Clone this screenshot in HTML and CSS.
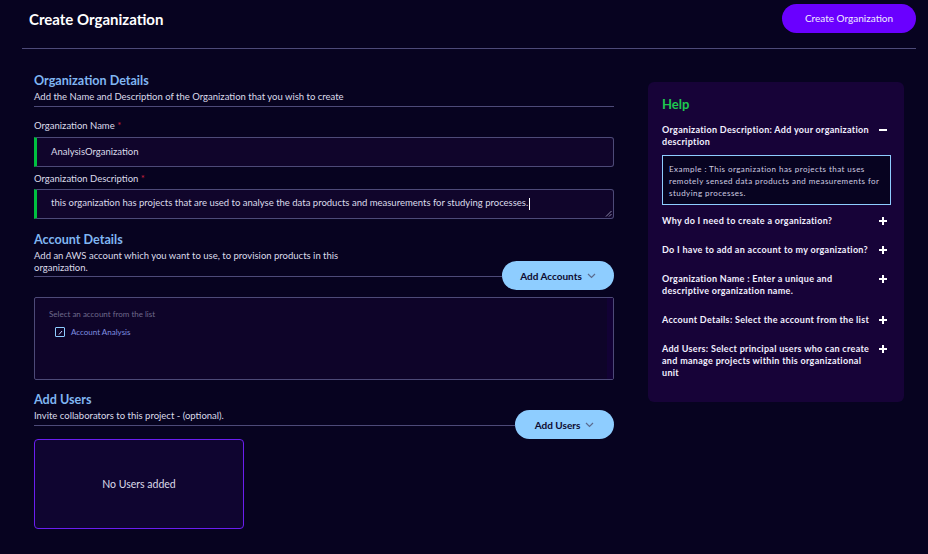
FILE: index.html
```html
<!DOCTYPE html>
<html>
<head>
<meta charset="utf-8">
<link rel="stylesheet" href="styles.css">
</head>
<body>
<div class="page">
  <header class="topbar">
    <h1 class="title">Create Organization</h1>
    <button class="btn-primary">Create Organization</button>
  </header>
  <div class="divider"></div>
  <main class="main">
    <section class="form">
      <div class="sec-head">
        <div class="sec-text">
          <h2 class="sec-title">Organization Details</h2>
          <p class="sec-sub">Add the Name and Description of the Organization that you wish to create</p>
        </div>
      </div>
      <label class="label first">Organization Name <span class="req">*</span></label>
      <div class="field">AnalysisOrganization</div>
      <label class="label">Organization Description <span class="req">*</span></label>
      <div class="field area">this organization has projects that are used to analyse the data products and measurements for studying processes.<span class="caret"></span>
        <svg class="grip" width="7" height="7" viewBox="0 0 7 7"><path d="M6.5 1 L1 6.5 M6.5 4 L4 6.5" stroke="#8a88a8" stroke-width="1"/></svg>
      </div>

      <div class="sec-head acc">
        <div class="sec-text">
          <h2 class="sec-title">Account Details</h2>
          <p class="sec-sub narrow">Add an AWS account which you want to use, to provision products in this organization.</p>
        </div>
        <button class="btn-pill wide">Add Accounts <svg class="chev" width="9" height="6" viewBox="0 0 9 6"><path d="M1 1 L4.5 4.5 L8 1" fill="none" stroke="#5b6b8f" stroke-width="1.2"/></svg></button>
      </div>
      <div class="acc-box">
        <div class="acc-hint">Select an account from the list</div>
        <div class="acc-row">
          <span class="check"><svg width="7" height="7" viewBox="0 0 7 7"><path d="M2 5.5 L5 2" stroke="#c8d6ff" stroke-width="1"/></svg></span>
          <span class="acc-name">Account Analysis</span>
        </div>
        <div class="scroll-strip"></div>
      </div>

      <div class="sec-head users">
        <div class="sec-text">
          <h2 class="sec-title">Add Users</h2>
          <p class="sec-sub">Invite collaborators to this project - (optional).</p>
        </div>
        <button class="btn-pill">Add Users <svg class="chev" width="9" height="6" viewBox="0 0 9 6"><path d="M1 1 L4.5 4.5 L8 1" fill="none" stroke="#5b6b8f" stroke-width="1.2"/></svg></button>
      </div>
      <div class="users-box">No Users added</div>
    </section>

    <aside class="help">
      <h3 class="help-title">Help</h3>
      <div class="help-item open">
        <span class="q">Organization Description: Add your organization description</span>
        <svg class="ico" width="8" height="8" viewBox="0 0 8 8"><rect x="0" y="3" width="8" height="2" fill="#fff"/></svg>
      </div>
      <div class="help-answer">Example : This organization has projects that uses remotely sensed data products and measurements for studying processes.</div>
      <div class="help-item">
        <span class="q">Why do I need to create a organization?</span>
        <svg class="ico" width="8" height="8" viewBox="0 0 8 8"><path d="M3 0h2v3h3v2h-3v3h-2v-3h-3v-2h3z" fill="#fff"/></svg>
      </div>
      <div class="help-item">
        <span class="q">Do I have to add an account to my organization?</span>
        <svg class="ico" width="8" height="8" viewBox="0 0 8 8"><path d="M3 0h2v3h3v2h-3v3h-2v-3h-3v-2h3z" fill="#fff"/></svg>
      </div>
      <div class="help-item">
        <span class="q">Organization Name : Enter a unique and descriptive organization name.</span>
        <svg class="ico" width="8" height="8" viewBox="0 0 8 8"><path d="M3 0h2v3h3v2h-3v3h-2v-3h-3v-2h3z" fill="#fff"/></svg>
      </div>
      <div class="help-item">
        <span class="q">Account Details: Select the account from the list</span>
        <svg class="ico" width="8" height="8" viewBox="0 0 8 8"><path d="M3 0h2v3h3v2h-3v3h-2v-3h-3v-2h3z" fill="#fff"/></svg>
      </div>
      <div class="help-item">
        <span class="q">Add Users: Select principal users who can create and manage projects within this organizational unit</span>
        <svg class="ico" width="8" height="8" viewBox="0 0 8 8"><path d="M3 0h2v3h3v2h-3v3h-2v-3h-3v-2h3z" fill="#fff"/></svg>
      </div>
    </aside>
  </main>
</div>
</body>
</html>
```
FILE: styles.css
```css
* { box-sizing: border-box; }
html, body { margin: 0; padding: 0; }
body {
  background: #070320;
  font-family: "Lato", "Noto Sans", sans-serif;
  color: #dcdbea;
  width: 928px;
  height: 554px;
  overflow: hidden;
}
.page { width: 928px; }
.topbar {
  display: flex;
  align-items: center;
  justify-content: space-between;
  padding: 4px 12px 0 29px;
  height: 33px;
}
.title {
  margin: 0;
  font-size: 15px;
  font-weight: 700;
  color: #ffffff;
  line-height: 18px;
}
.btn-primary {
  background: #6a00ff;
  color: #f0ecff;
  border: none;
  border-radius: 15px;
  height: 29px;
  width: 134px;
  font-family: inherit;
  font-size: 10px;
  padding: 0 0 1px;
}
.divider {
  height: 1px;
  background: #4d4a78;
  margin: 15px 12px 0 22px;
}
.main {
  display: flex;
  gap: 34px;
  padding-left: 34px;
}
.form {
  width: 580px;
  display: flex;
  flex-direction: column;
}
.sec-head {
  display: flex;
  align-items: flex-end;
  margin-top: 24px;
}
.sec-text {
  flex: 1;
  border-bottom: 1px solid #4d4a78;
  padding-bottom: 3px;
}
.sec-head.acc .sec-text { padding-bottom: 2px; }
.sec-title {
  margin: 0;
  font-size: 12.6px;
  font-weight: 700;
  color: #80b6f2;
  line-height: 16px;
}
.sec-sub {
  margin: 2px 0 0;
  font-size: 9.5px;
  line-height: 12px;
  color: #dcdbea;
}
.sec-sub.narrow { max-width: 312px; }
.label {
  font-size: 9.5px;
  line-height: 14px;
  color: #dcdbea;
}
.label.first { margin-top: 12px; }
.label + .field { margin-top: 4px; }
.field + .label { margin-top: 5px; }
.req { color: #c8203c; }
.field {
  position: relative;
  height: 30px;
  background: #10052b;
  border: 1px solid #4d4a78;
  border-left: 3px solid #00c040;
  border-radius: 0 3px 3px 0;
  font-size: 9.5px;
  line-height: 28px;
  padding-left: 14px;
  color: #dcdbea;
}
.field.area { margin-top: 3px; line-height: 26px; }
.caret {
  display: inline-block;
  width: 1px;
  height: 12px;
  background: #ffffff;
  vertical-align: middle;
  margin-left: 1px;
}
.grip { position: absolute; right: 1px; bottom: 1px; }
.sec-head.acc { margin-top: 13px; }
.btn-pill {
  flex: none;
  height: 29px;
  width: 99px;
  border-radius: 15px;
  border: none;
  background: #8ecdff;
  color: #0d0a30;
  font-family: inherit;
  font-weight: 700;
  font-size: 10px;
  margin-bottom: -13px;
  display: flex;
  align-items: center;
  justify-content: center;
  gap: 5px;
  padding: 0;
}
.btn-pill.wide { width: 112px; }
.acc-box {
  position: relative;
  margin-top: 20px;
  height: 83px;
  background: #0e0429;
  border: 1px solid #4d4a78;
  border-radius: 2px;
  padding: 11px 0 0 14px;
}
.acc-hint {
  font-size: 8px;
  line-height: 10px;
  color: #6e6a8c;
}
.acc-row {
  display: flex;
  align-items: center;
  gap: 6px;
  margin-top: 8px;
  padding-left: 6px;
}
.check {
  width: 10px;
  height: 10px;
  border: 1px solid #8ecdff;
  border-radius: 1px;
  display: flex;
  align-items: center;
  justify-content: center;
}
.acc-name {
  font-size: 8px;
  line-height: 10px;
  color: #7f8fe0;
}
.scroll-strip {
  position: absolute;
  right: 0;
  top: 0;
  bottom: 0;
  width: 6px;
  background: #120135;
}
.sec-head.users { margin-top: 12px; }
.users-box {
  margin-top: 13px;
  width: 210px;
  height: 90px;
  flex: none;
  border: 1px solid #6a1ef0;
  border-radius: 4px;
  background: #0f0530;
  display: flex;
  align-items: center;
  justify-content: center;
  font-size: 10.5px;
  color: #dcdbea;
}
.help {
  margin-top: 33px;
  width: 256px;
  height: 320px;
  background: #170338;
  border-radius: 6px;
  padding: 14px 14px 0 14px;
}
.help-title {
  margin: 0;
  font-size: 13px;
  font-weight: 700;
  color: #1ec850;
  line-height: 16px;
}
.help-item {
  display: flex;
  justify-content: space-between;
  align-items: flex-start;
  padding: 9px 0 8px;
}
.help-item.open { padding: 12px 0 7px; }
.q {
  width: 212px;
  font-size: 9px;
  letter-spacing: 0.3px;
  font-weight: 700;
  line-height: 12px;
  color: #f2f0ff;
}
.ico { margin-top: 2px; margin-right: 3px; }
.help-answer {
  width: 229px;
  border: 1px solid #8ecdff;
  background: #070320;
  padding: 7px 5px 5px 6px;
  font-size: 8px;
  letter-spacing: 0.45px;
  line-height: 12px;
  color: #cfcde0;
  margin-bottom: 1px;
}
```
